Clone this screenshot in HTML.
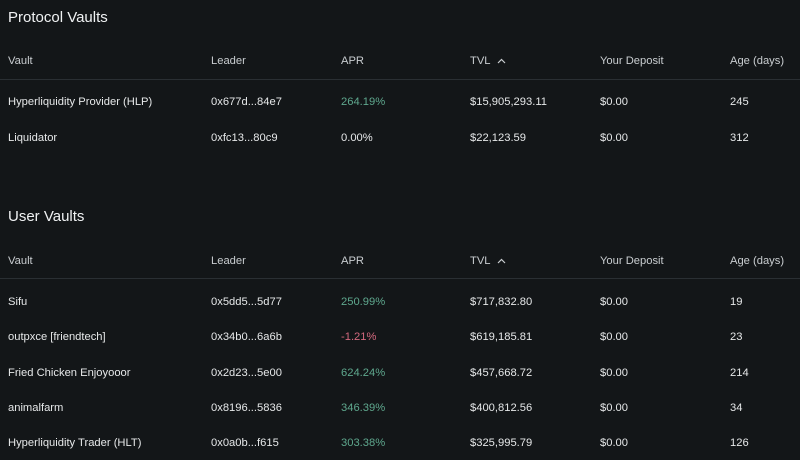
<!DOCTYPE html>
<html><head><style>
body{margin:0;width:800px;height:460px;background:#131618;color:#e6e8e9;font-family:"Liberation Sans",sans-serif;overflow:hidden;position:relative}
.t{position:absolute;left:8px;font-size:15px;color:#f0f2f3}
.r{position:absolute;left:0;width:800px;height:20px;font-size:11.2px;line-height:20px}
.r span{position:absolute;white-space:nowrap}
.h{color:#c9cdd0}
.line{position:absolute;left:0;width:800px;height:1px;background:#2a2f33}
.g{color:#5fa88e}.rd{color:#d4697e}
svg{vertical-align:middle;margin-left:6px}
</style></head><body>
<div class="t" style="top:9px">Protocol Vaults</div>
<div class="r h" style="top:51px"><span style="left:8px">Vault</span><span style="left:211px">Leader</span><span style="left:341px">APR</span><span style="left:470px">TVL<svg width="9" height="6" viewBox="0 0 9 6"><path d="M1 5L4.5 1.5L8 5" stroke="#c9cdd0" fill="none" stroke-width="1.2"/></svg></span><span style="left:600px">Your Deposit</span><span style="left:730px">Age (days)</span></div>
<div class="line" style="top:79px"></div>
<div class="r" style="top:92px"><span style="left:8px">Hyperliquidity Provider (HLP)</span><span style="left:211px">0x677d...84e7</span><span style="left:341px" class="g">264.19%</span><span style="left:470px">$15,905,293.11</span><span style="left:600px">$0.00</span><span style="left:730px">245</span></div>
<div class="r" style="top:128px"><span style="left:8px">Liquidator</span><span style="left:211px">0xfc13...80c9</span><span style="left:341px">0.00%</span><span style="left:470px">$22,123.59</span><span style="left:600px">$0.00</span><span style="left:730px">312</span></div>
<div class="t" style="top:208px">User Vaults</div>
<div class="r h" style="top:251px"><span style="left:8px">Vault</span><span style="left:211px">Leader</span><span style="left:341px">APR</span><span style="left:470px">TVL<svg width="9" height="6" viewBox="0 0 9 6"><path d="M1 5L4.5 1.5L8 5" stroke="#c9cdd0" fill="none" stroke-width="1.2"/></svg></span><span style="left:600px">Your Deposit</span><span style="left:730px">Age (days)</span></div>
<div class="line" style="top:278px"></div>
<div class="r" style="top:292px"><span style="left:8px">Sifu</span><span style="left:211px">0x5dd5...5d77</span><span style="left:341px" class="g">250.99%</span><span style="left:470px">$717,832.80</span><span style="left:600px">$0.00</span><span style="left:730px">19</span></div>
<div class="r" style="top:327px"><span style="left:8px">outpxce [friendtech]</span><span style="left:211px">0x34b0...6a6b</span><span style="left:341px" class="rd">-1.21%</span><span style="left:470px">$619,185.81</span><span style="left:600px">$0.00</span><span style="left:730px">23</span></div>
<div class="r" style="top:363px"><span style="left:8px">Fried Chicken Enjoyooor</span><span style="left:211px">0x2d23...5e00</span><span style="left:341px" class="g">624.24%</span><span style="left:470px">$457,668.72</span><span style="left:600px">$0.00</span><span style="left:730px">214</span></div>
<div class="r" style="top:398px"><span style="left:8px">animalfarm</span><span style="left:211px">0x8196...5836</span><span style="left:341px" class="g">346.39%</span><span style="left:470px">$400,812.56</span><span style="left:600px">$0.00</span><span style="left:730px">34</span></div>
<div class="r" style="top:433px"><span style="left:8px">Hyperliquidity Trader (HLT)</span><span style="left:211px">0x0a0b...f615</span><span style="left:341px" class="g">303.38%</span><span style="left:470px">$325,995.79</span><span style="left:600px">$0.00</span><span style="left:730px">126</span></div>
</body></html>
